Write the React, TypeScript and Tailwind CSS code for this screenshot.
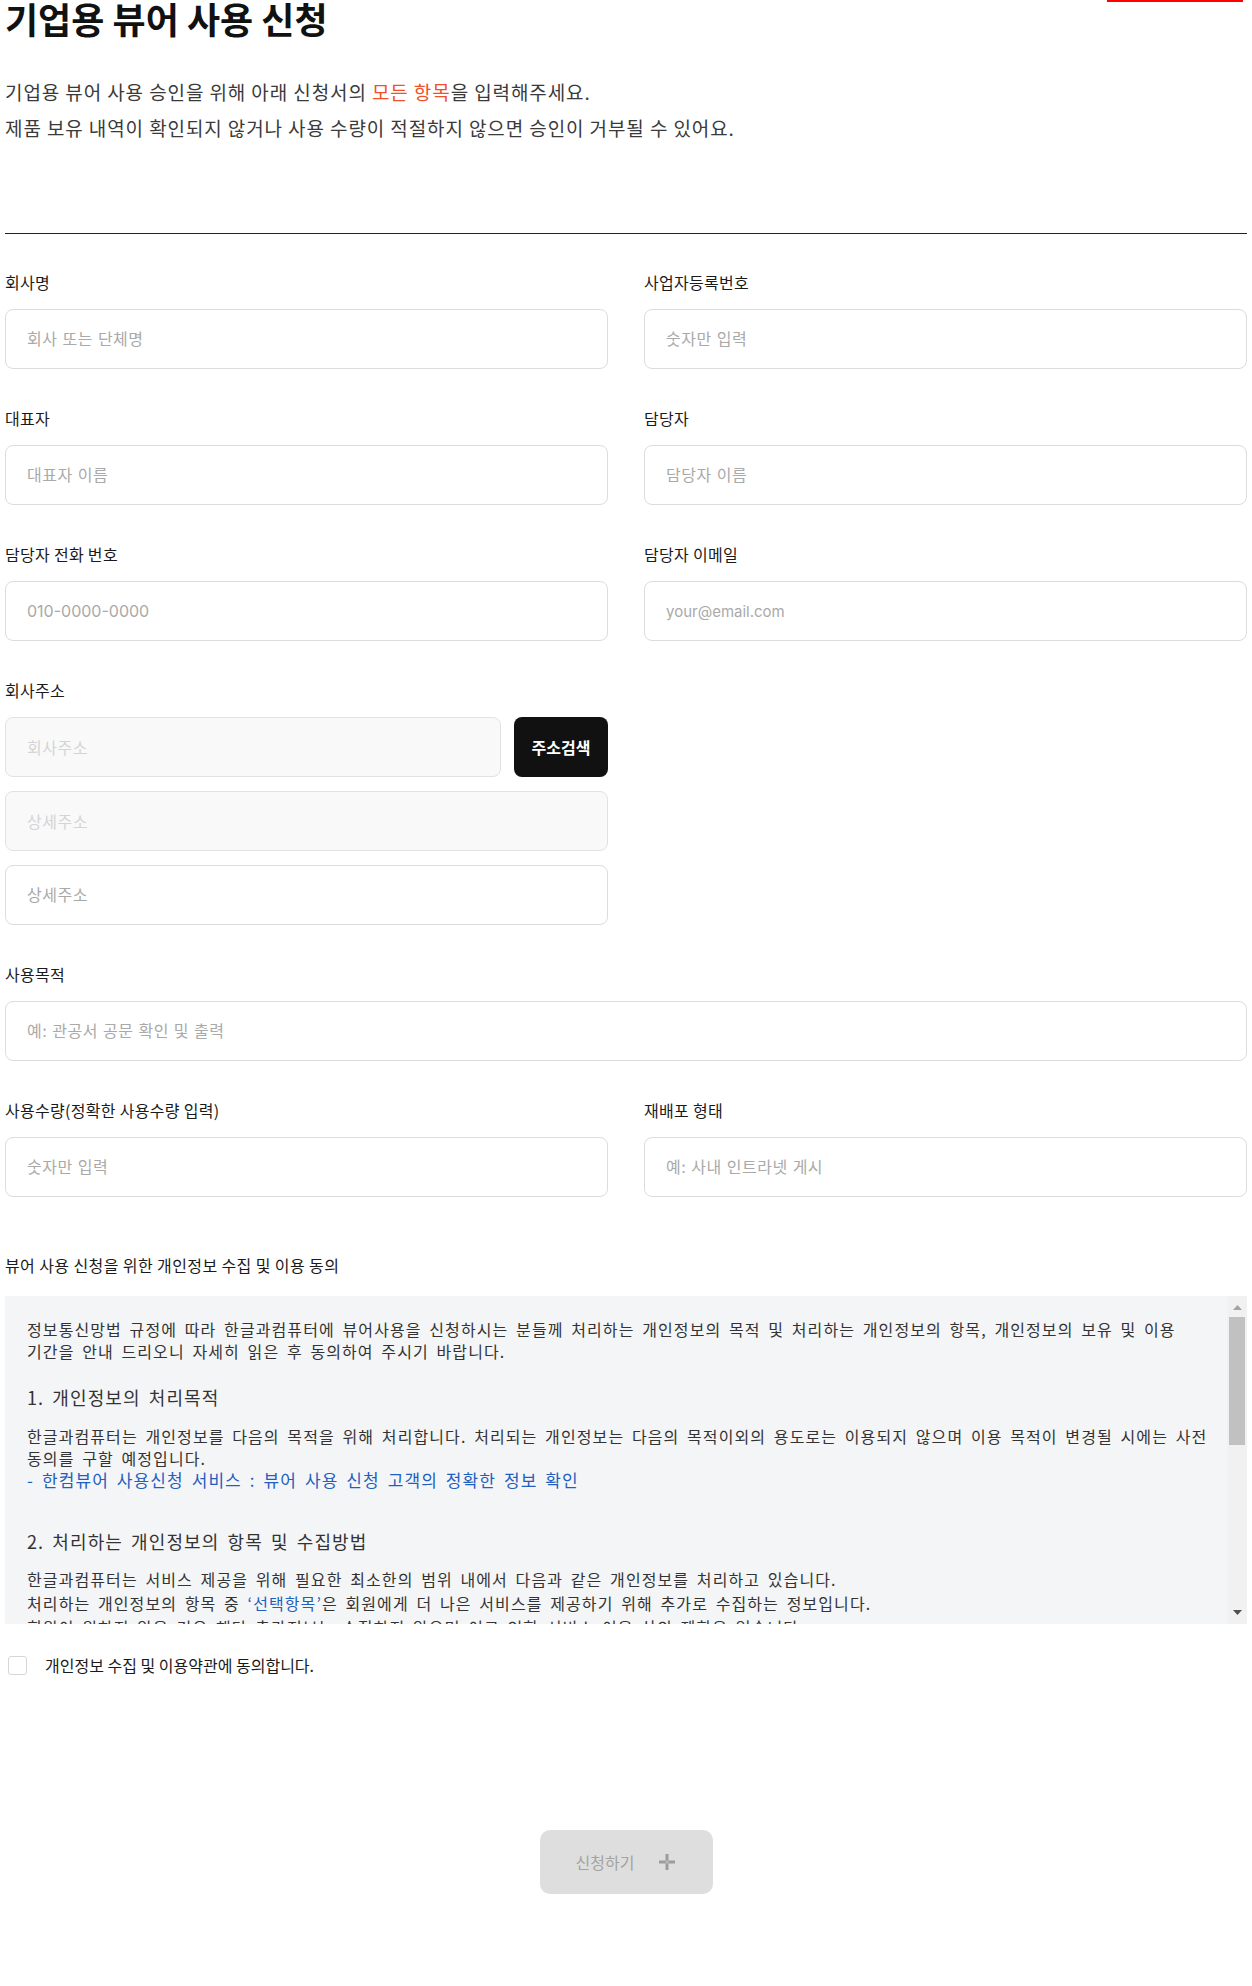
import React from 'react';

const font = "font-['Noto_Sans_CJK_KR','Noto_Sans',sans-serif]";

const inputBase =
  "h-[60px] w-full rounded-[8px] border border-[#dcdcdc] bg-white px-[21px] font-['Inter','Noto_Sans_CJK_KR',sans-serif] text-[16px] tracking-[0.5px] text-[#222] placeholder:text-[#a9a9a9] outline-none";

const disabledInput =
  'h-[60px] w-full rounded-[8px] border border-[#e2e2e2] bg-[#f9f9f9] px-[21px] text-[16px] tracking-[0.5px] placeholder:text-[#d4d4d4] outline-none';

interface FieldProps {
  label: string;
  className?: string;
  children: React.ReactNode;
}

const Field: React.FC<FieldProps> = ({ label, className = '', children }) => (
  <div className={`flex flex-col gap-[16px] ${className}`}>
    <label className="text-[16px] leading-[22px] tracking-[0.3px] text-[#1a1a1a]">{label}</label>
    {children}
  </div>
);

const PlusIcon = () => (
  <svg width="18" height="18" viewBox="0 0 18 18" fill="none">
    <rect x="7.5" y="1" width="3" height="16" fill="#9c9c9c" />
    <rect x="1" y="7.5" width="16" height="3" fill="#9c9c9c" />
    <rect x="7.5" y="7.5" width="3" height="3" fill="#b8b8b8" />
  </svg>
);

// scrollbar column drawn next to the terms text
const FakeScrollbar = () => (
  <div className="flex w-[20px] shrink-0 flex-col bg-[#f1f1f1]">
    <div className="flex h-[21px] items-start justify-center pt-[9px]">
      <svg width="9" height="5" viewBox="0 0 9 5">
        <path d="M4.5 0L9 5H0z" fill="#a3a3a3" />
      </svg>
    </div>
    <div className="mx-[2px] h-[128px] bg-[#c1c1c1]" />
    <div className="flex-1" />
    <div className="flex h-[21px] items-end justify-center pb-[9px]">
      <svg width="9" height="5" viewBox="0 0 9 5">
        <path d="M0 0H9L4.5 5z" fill="#505050" />
      </svg>
    </div>
  </div>
);

const App: React.FC = () => {
  return (
    <div className={`min-h-screen bg-white px-[5px] pb-[92px] ${font}`}>
      <div className="relative">
        <div className="absolute right-[4px] top-0 h-[2px] w-[136px] bg-[#ff0000]" />
        <h1 className="text-[36px] font-bold leading-[36px] text-[#111]">기업용 뷰어 사용 신청</h1>
        <div className="mt-[38px] text-[19px] leading-[36px] tracking-[0.9px] text-[#3a3a3a]">
          <p>
            기업용 뷰어 사용 승인을 위해 아래 신청서의 <span className="text-[#f0502a]">모든 항목</span>을 입력해주세요.
          </p>
          <p>제품 보유 내역이 확인되지 않거나 사용 수량이 적절하지 않으면 승인이 거부될 수 있어요.</p>
        </div>
      </div>

      <div className="mt-[87px] h-px w-full bg-[#222]" />

      <form className="mt-[37px] grid grid-cols-2 gap-x-[36px] gap-y-[38px]">
        <Field label="회사명">
          <input className={inputBase} placeholder="회사 또는 단체명" />
        </Field>
        <Field label="사업자등록번호">
          <input className={inputBase} placeholder="숫자만 입력" />
        </Field>
        <Field label="대표자">
          <input className={inputBase} placeholder="대표자 이름" />
        </Field>
        <Field label="담당자">
          <input className={inputBase} placeholder="담당자 이름" />
        </Field>
        <Field label="담당자 전화 번호">
          <input className={`${inputBase} !tracking-[0px]`} placeholder="010-0000-0000" />
        </Field>
        <Field label="담당자 이메일">
          <input className={`${inputBase} !text-[15px] !tracking-[0px]`} placeholder="your@email.com" />
        </Field>
        <Field label="회사주소" className="col-start-1">
          <div className="flex flex-col gap-[14px]">
            <div className="flex gap-[13px]">
              <input className={disabledInput} placeholder="회사주소" disabled />
              <button
                type="button"
                className="h-[60px] w-[94px] shrink-0 rounded-[8px] bg-[#111] text-[16px] font-bold text-white"
              >
                주소검색
              </button>
            </div>
            <input className={disabledInput} placeholder="상세주소" disabled />
            <input className={inputBase} placeholder="상세주소" />
          </div>
        </Field>
        <Field label="사용목적" className="col-span-2">
          <input className={inputBase} placeholder="예: 관공서 공문 확인 및 출력" />
        </Field>
        <Field label="사용수량(정확한 사용수량 입력)">
          <input className={inputBase} placeholder="숫자만 입력" />
        </Field>
        <Field label="재배포 형태">
          <input className={inputBase} placeholder="예: 사내 인트라넷 게시" />
        </Field>
      </form>

      <div className="mt-[57px]">
        <p className="text-[16px] leading-[22px] tracking-[0.4px] text-[#1a1a1a]">뷰어 사용 신청을 위한 개인정보 수집 및 이용 동의</p>
        <div className="mt-[20px] flex h-[328px] bg-[#f4f5f7]">
          <div className="min-w-0 flex-1 overflow-hidden pl-[22px] pt-[22px] text-[#333] tracking-[1.1px] [word-spacing:3px]">
            <p className="whitespace-nowrap text-[16px] leading-[22px]">
              정보통신망법 규정에 따라 한글과컴퓨터에 뷰어사용을 신청하시는 분들께 처리하는 개인정보의 목적 및 처리하는 개인정보의 항목, 개인정보의 보유 및 이용
              <br />
              기간을 안내 드리오니 자세히 읽은 후 동의하여 주시기 바랍니다.
            </p>
            <h3 className="mt-[22px] text-[18px] leading-[26px]">1. 개인정보의 처리목적</h3>
            <p className="mt-[15px] whitespace-nowrap text-[16px] leading-[22px]">
              한글과컴퓨터는 개인정보를 다음의 목적을 위해 처리합니다. 처리되는 개인정보는 다음의 목적이외의 용도로는 이용되지 않으며 이용 목적이 변경될 시에는 사전
              <br />
              동의를 구할 예정입니다.
            </p>
            <p className="whitespace-nowrap text-[17px] leading-[22px] text-[#1f5fbf]">
              - 한컴뷰어 사용신청 서비스 : 뷰어 사용 신청 고객의 정확한 정보 확인
            </p>
            <h3 className="mt-[37px] text-[18px] leading-[26px]">2. 처리하는 개인정보의 항목 및 수집방법</h3>
            <p className="mt-[13px] whitespace-nowrap text-[16px] leading-[24px]">
              한글과컴퓨터는 서비스 제공을 위해 필요한 최소한의 범위 내에서 다음과 같은 개인정보를 처리하고 있습니다.
              <br />
              처리하는 개인정보의 항목 중 <span className="text-[#1f5fbf]">‘선택항목’</span>은 회원에게 더 나은 서비스를 제공하기 위해 추가로 수집하는 정보입니다.
              <br />
              회원이 원하지 않을 경우 해당 추가정보는 수집하지 않으며 이로 인한 서비스 이용 상의 제한은 없습니다.
            </p>
          </div>
          <FakeScrollbar />
        </div>
      </div>

      <label className="mt-[31px] flex items-center gap-[18px] pl-[3px]">
        <span className="h-[19px] w-[19px] rounded-[3px] border-[1.5px] border-[#d6d6d6] bg-white" />
        <span className="text-[16px] leading-[20px] text-[#1a1a1a]">개인정보 수집 및 이용약관에 동의합니다.</span>
      </label>

      <div className="mt-[155px] flex justify-center">
        <button
          type="button"
          disabled
          className="flex h-[64px] w-[173px] items-center justify-center gap-[24px] rounded-[10px] bg-[#dedede] text-[16px] text-[#a3a3a3]"
        >
          <span>신청하기</span>
          <PlusIcon />
        </button>
      </div>
    </div>
  );
};

export default App;
